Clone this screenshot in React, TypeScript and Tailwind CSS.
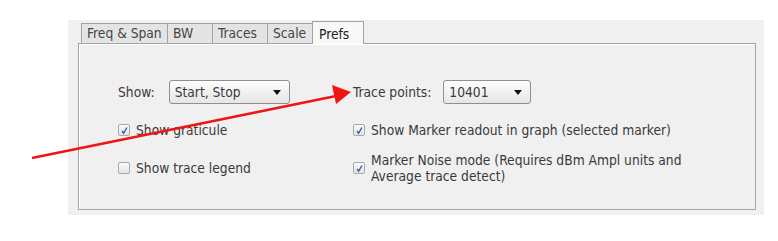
const tabs = [
  { label: "Freq & Span", w: "w-[87px]" },
  { label: "BW", w: "w-[46px]" },
  { label: "Traces", w: "w-[56px]" },
  { label: "Scale", w: "w-[46px]" },
];

function Check({ checked }: { checked?: boolean }) {
  return (
    <span className="flex h-[12px] w-[12px] shrink-0 items-center justify-center rounded-[2px] border border-[#a9a9a9] bg-gradient-to-b from-[#fafafa] to-[#e4e4e4]">
      {checked && (
        <svg width="9" height="9" viewBox="0 0 9 9">
          <path d="M2 5 L3.6 7.2 L7 1.5" fill="none" stroke="#3b5aa8" strokeWidth="1.4" />
        </svg>
      )}
    </span>
  );
}

function Select({ value, w }: { value: string; w: string }) {
  return (
    <div
      className={`flex h-[24px] ${w} items-center justify-between rounded-[3px] border border-[#8f8f8f] bg-gradient-to-b from-[#fdfdfd] to-[#e6e6e6] pl-[5px] pr-[8px]`}
    >
      <span>{value}</span>
      <svg width="8" height="5" viewBox="0 0 8 5">
        <path d="M0 0 H8 L4 5 Z" fill="#111" />
      </svg>
    </div>
  );
}

export default function App() {
  return (
    <div
      className="relative h-[241px] w-[778px] bg-white text-[13.7px] text-[#3a3a3a]"
      style={{ fontFamily: "'DejaVu Sans Condensed', 'Liberation Sans', sans-serif" }}
    >
      <div className="absolute left-[68px] top-[20px] h-[195px] w-[696px] bg-[#f0f0f0] pl-[10px] pr-[8px] pt-[1px]">
        <div className="flex h-[22px] items-end pl-[3px]">
          {tabs.map((t) => (
            <div
              key={t.label}
              className={`flex h-[20px] ${t.w} items-center border border-b-0 border-[#a3a3a3] bg-[#e4e4e4] pl-[5px] text-[#444] -ml-px first:ml-0`}
            >
              {t.label}
            </div>
          ))}
          <div className="relative z-10 -mb-px -ml-px flex h-[23px] w-[52px] items-start border border-b-0 border-[#a3a3a3] bg-[#f8f8f8] pl-[6px] pt-[2px] text-[#222]">
            Prefs
          </div>
        </div>
        <div className="flex h-[167px] border border-[#a3a3a3] bg-[#f0f0f0] pl-[39px] pt-[36px] shadow-[inset_1px_1px_0_#ffffff]">
          <div className="flex w-[235px] flex-col">
            <div className="flex h-[24px] items-center gap-[14px]">
              <span>Show:</span>
              <Select value="Start, Stop" w="w-[121px]" />
            </div>
            <div className="mt-[18px] flex h-[16px] items-center gap-[6px]">
              <Check checked />
              <span>Show graticule</span>
            </div>
            <div className="mt-[22px] flex h-[16px] items-center gap-[6px]">
              <Check />
              <span>Show trace legend</span>
            </div>
          </div>
          <div className="flex flex-col">
            <div className="flex h-[24px] items-center gap-[12px]">
              <span>Trace points:</span>
              <Select value="10401" w="w-[88px]" />
            </div>
            <div className="mt-[18px] flex h-[16px] items-center gap-[6px]">
              <Check checked />
              <span>Show Marker readout in graph (selected marker)</span>
            </div>
            <div className="mt-[14px] flex items-center gap-[6px]">
              <Check checked />
              <span className="leading-[16px]">
                Marker Noise mode (Requires dBm Ampl units and
                <br />
                Average trace detect)
              </span>
            </div>
          </div>
        </div>
      </div>
      <svg className="pointer-events-none absolute left-0 top-0" width="778" height="241">
        <line x1="32" y1="158" x2="336" y2="96" stroke="#f01414" strokeWidth="2.6" />
        <path d="M351 92 L332 85 L336 104 Z" fill="#f01414" />
      </svg>
    </div>
  );
}
